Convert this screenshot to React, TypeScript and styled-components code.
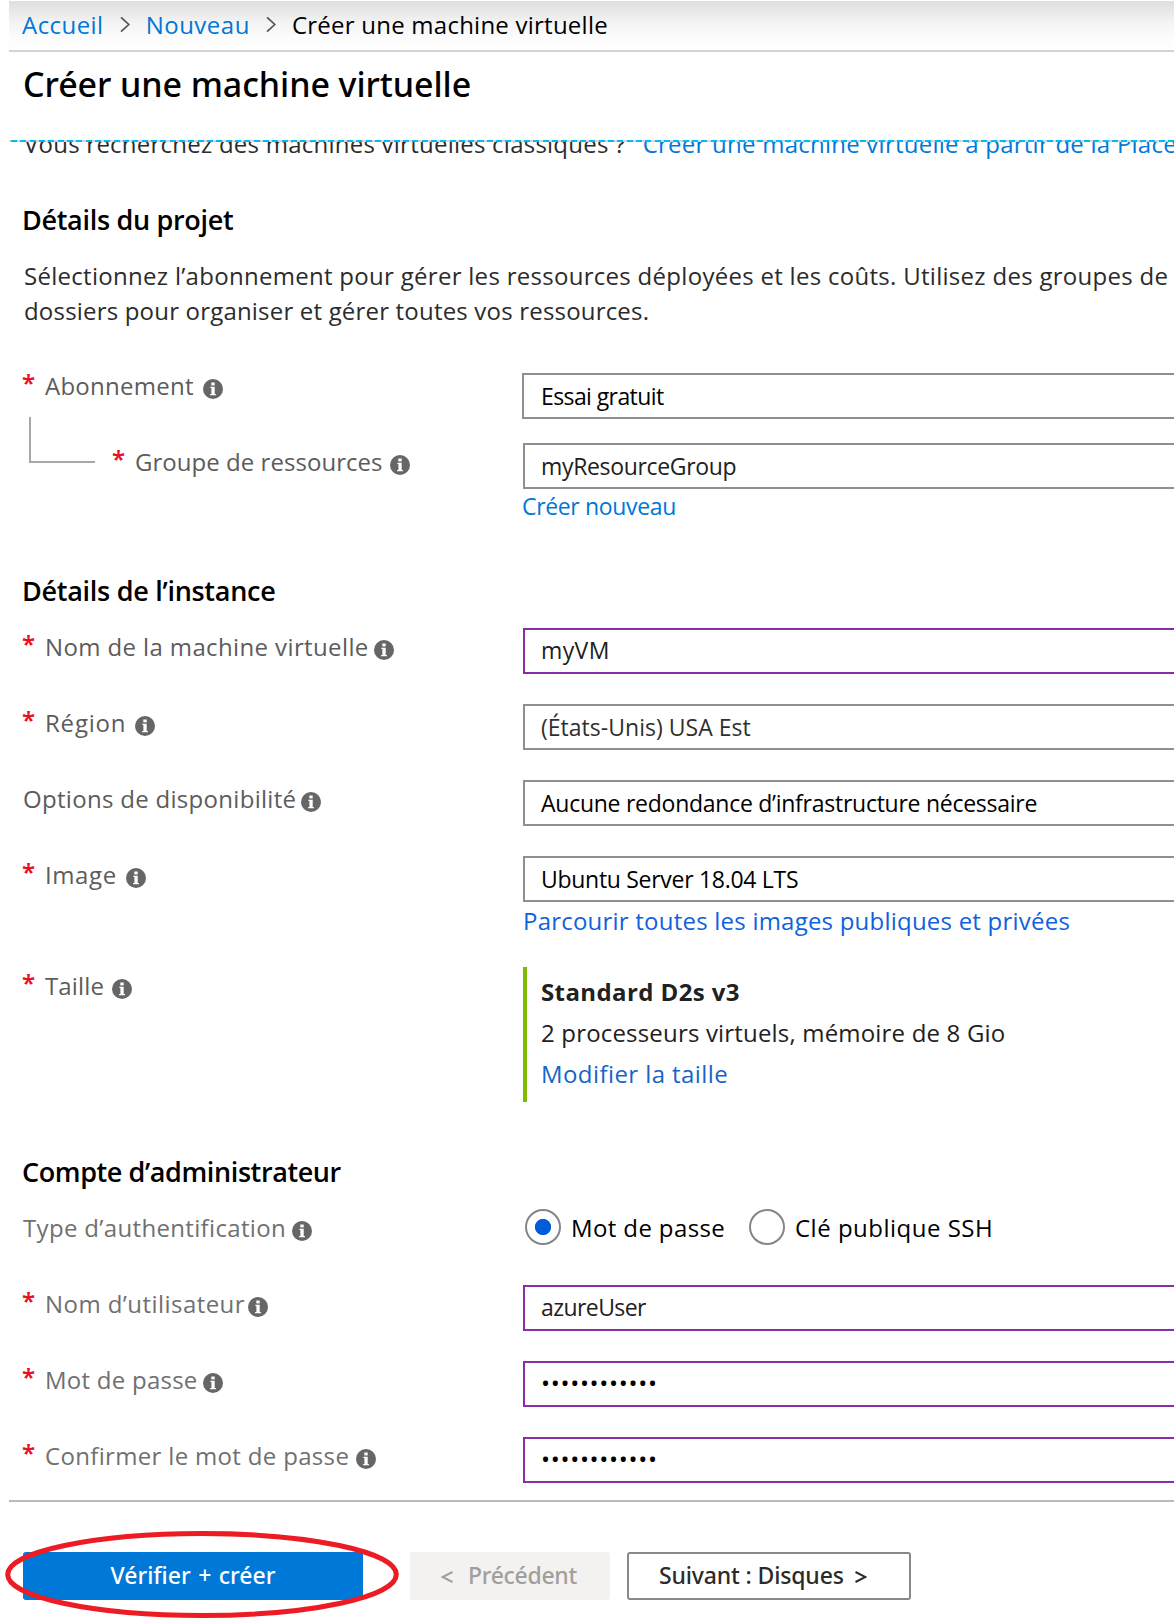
import React from "react";
import styled, { createGlobalStyle } from "styled-components";

const GlobalStyle = createGlobalStyle`
  *, *::before, *::after { box-sizing: border-box; }
  body {
    margin: 0;
    background: #fff;
    color: #212121;
    font-family: "Open Sans", "Noto Sans", sans-serif;
    font-size: 24px;
    overflow: hidden;
  }
`;

const Page = styled.div`
  position: relative;
  width: 1174px;
  height: 1618px;
  display: flex;
  flex-direction: column;
  overflow: hidden;
  background: #fff;
`;

const Breadcrumb = styled.nav`
  flex: none;
  height: 51px;
  margin: 1px 0 0 9px;
  padding: 0 0 2px 13px;
  display: flex;
  align-items: center;
  gap: 16px;
  white-space: nowrap;
  border-bottom: 2px solid #d4d4d4;
  background: linear-gradient(#dedede, #f4f4f4 45%, #fcfcfc 75%, #fff);
`;

const Crumb = styled.span<{ $link?: boolean; $ls: number }>`
  line-height: 34px;
  color: ${(p) => (p.$link ? "#0078d7" : "#000")};
  letter-spacing: ${(p) => p.$ls}px;
`;

const TitleBar = styled.header`
  flex: none;
  height: 88px;
  padding: 10px 0 0 23px;
`;

const Title = styled.h1`
  margin: 0;
  font: 500 34px/44px "Noto Sans", sans-serif;
  letter-spacing: -0.08px;
  color: #000;
`;

const FocusLine = styled.div`
  flex: none;
  height: 2px;
  margin-left: 9px;
  background: repeating-linear-gradient(90deg, #d6d6d6 0 2px, #00bcf2 2px 8px, #d6d6d6 8px 9.33px);
`;

const Content = styled.main`
  flex: none;
  height: 1358px;
  padding-left: 23px;
  overflow: hidden;
`;

const ClassicNotice = styled.p`
  margin: -16px 0 0 1px;
  line-height: 35px;
  white-space: nowrap;
  letter-spacing: 0.24px;
  color: #2b2b2b;
`;

const NoticeLink = styled.a`
  margin-left: 17px;
  color: #0078d7;
`;

const Heading = styled.h2<{ $top: number; $ls: number }>`
  margin: ${(p) => p.$top}px 0 0 -1px;
  font-size: 27px;
  font-weight: 600;
  line-height: 35px;
  letter-spacing: ${(p) => p.$ls}px;
  color: #000;
`;

const Paragraph = styled.p`
  margin: 21px 0 45px 1px;
  line-height: 35px;
  white-space: nowrap;
  color: #2b2b2b;
`;

const TextLine = styled.span<{ $ls: number }>`
  display: block;
  letter-spacing: ${(p) => p.$ls}px;
`;

const Rows = styled.div<{ $top?: number; $gap?: number }>`
  display: flex;
  flex-direction: column;
  gap: ${(p) => p.$gap ?? 30}px;
  margin-top: ${(p) => p.$top ?? 0}px;
`;

const Row = styled.div`
  display: grid;
  grid-template-columns: 500px 1fr;
  align-items: start;
`;

const LabelBox = styled.div<{ $top: number }>`
  display: flex;
  align-items: flex-start;
  height: 25px;
  margin-top: ${(p) => p.$top}px;
  line-height: 25px;
  white-space: nowrap;
`;

const Required = styled.span`
  flex: none;
  width: 22px;
  margin: -3px 0 0 -1px;
  padding-right: 1px;
  box-sizing: content-box;
  font: 600 24px/25px "Noto Sans", sans-serif;
  color: #e81123;
`;

const LabelText = styled.span<{ $width: number; $ls: number; $light?: boolean }>`
  flex: none;
  width: ${(p) => p.$width}px;
  letter-spacing: ${(p) => p.$ls}px;
  color: ${(p) => (p.$light ? "#707070" : "#5c5c5c")};
`;

const InfoSvg = styled.svg`
  flex: none;
  width: 20px;
  height: 20px;
  margin-top: 6px;
`;

const Branch = styled.span`
  flex: none;
  width: 66px;
  height: 46px;
  margin: -32px 18px 0 6px;
  border: solid #a8a8a8;
  border-width: 0 0 2px 2px;
`;

const Field = styled.div<{ $edited?: boolean; $ls?: number; $shift?: number; $tone?: string }>`
  height: 46px;
  margin-left: ${(p) => p.$shift ?? 0}px;
  padding: 0 0 0 ${(p) => 16 - (p.$shift ?? 0)}px;
  border: 2px solid ${(p) => (p.$edited ? "#8a2da5" : "#8f8f8f")};
  border-right: 0;
  font-size: 23px;
  line-height: ${(p) => (p.$edited ? 40 : 42)}px;
  white-space: nowrap;
  letter-spacing: ${(p) => p.$ls ?? 0}px;
  color: ${(p) => p.$tone ?? "#000"};
`;

const Password = styled(Field)`
  font-size: 24px;
  letter-spacing: 0.7px;
`;

const FieldLink = styled.a<{ $size: number; $height: number; $ls: number; $color: string; $shift?: number }>`
  display: block;
  margin-left: ${(p) => p.$shift ?? 0}px;
  font-size: ${(p) => p.$size}px;
  line-height: ${(p) => p.$height}px;
  letter-spacing: ${(p) => p.$ls}px;
  color: ${(p) => p.$color};
`;

const SizeCard = styled.div`
  height: 135px;
  padding: 4px 0 0 14px;
  border-left: 4px solid #7fba00;
  line-height: 41px;
  white-space: nowrap;
`;

const SizeLine = styled.div<{ $ls: number; $bold?: boolean; $link?: boolean }>`
  font-weight: ${(p) => (p.$bold ? 700 : 400)};
  letter-spacing: ${(p) => p.$ls}px;
  color: ${(p) => (p.$link ? "#1565c8" : "#212121")};
`;

const RadioGroup = styled.div`
  display: flex;
  height: 36px;
  padding-left: 2px;
  line-height: 37px;
  white-space: nowrap;
  color: #000;
`;

const RadioOption = styled.label<{ $width: number; $ls: number }>`
  display: flex;
  gap: 10px;
  width: ${(p) => p.$width}px;
  letter-spacing: ${(p) => p.$ls}px;
`;

const RadioRing = styled.span<{ $on?: boolean }>`
  flex: none;
  width: 36px;
  height: 36px;
  border: 2px solid #858585;
  border-radius: 50%;
  background: ${(p) => (p.$on ? "radial-gradient(circle, #015cda 7.7px, #fff 8.5px)" : "#fff")};
`;

const Footer = styled.footer`
  flex: none;
  height: 118px;
  margin-left: 9px;
  padding: 50px 0 0 14px;
  display: flex;
  align-items: flex-start;
  border-top: 2px solid #bababa;
`;

const Button = styled.button<{ $kind: "primary" | "disabled" | "plain"; $width: number; $ls: number }>`
  width: ${(p) => p.$width}px;
  height: 48px;
  padding: 0 0 2px;
  display: flex;
  justify-content: center;
  font: 500 23px/46px "Noto Sans", sans-serif;
  letter-spacing: ${(p) => p.$ls}px;
  white-space: pre;
  border-radius: 3px;
  border: ${(p) => (p.$kind === "plain" ? "2px solid #888" : "0")};
  line-height: ${(p) => (p.$kind === "plain" ? 42 : 46)}px;
  color: ${(p) => ({ primary: "#fff", disabled: "#a19f9d", plain: "#2b2b2b" })[p.$kind]};
  background: ${(p) => ({ primary: "#0078d7", disabled: "#f3f2f1", plain: "#fff" })[p.$kind]};
`;

const PrimaryButton = styled(Button)`
  margin-right: 47px;
  word-spacing: 1.5px;
`;

const BackButton = styled(Button)`
  margin-right: 17px;
  justify-content: flex-start;
  padding-left: 31px;
  gap: 15px;
`;

const NextButton = styled(Button)`
  justify-content: flex-start;
  padding-left: 30px;
  gap: 11px;
`;

const Arrow = styled.svg`
  width: 12px;
  height: 12px;
  margin-top: 19px;
`;

const NextArrow = styled(Arrow)`
  margin-top: 17px;
`;

const Highlight = styled.svg`
  position: absolute;
  left: 4.5px;
  top: 1531px;
  width: 395px;
  height: 87px;
  pointer-events: none;
`;

const Chevron = () => (
  <svg width="10" height="16" viewBox="0 0 10 16" fill="none" stroke="#555" strokeWidth="1.7">
    <path d="M1 .3 8.8 7.5 1 14.7" />
  </svg>
);

const Info = () => (
  <InfoSvg viewBox="0 0 20 20">
    <circle cx="10" cy="10" r="10" fill="#666" />
    <rect x="8.3" y="3.5" width="3.4" height="2.9" fill="#fff" />
    <path d="M7.4 7.8h4.3v7.1h1.2v1.3H7.1v-1.3h1.3V9.1h-1z" fill="#fff" />
  </InfoSvg>
);

interface LabelProps {
  text: string;
  width: number;
  ls: number;
  top?: number;
  required?: boolean;
  light?: boolean;
  nested?: boolean;
}

const Label = ({ text, width, ls, top = 6, required = true, light, nested }: LabelProps) => (
  <LabelBox $top={top}>
    {nested && <Branch />}
    {required && <Required>*</Required>}
    <LabelText $width={width} $ls={ls} $light={light}>{text}</LabelText>
    <Info />
  </LabelBox>
);

const dots = "•".repeat(12);

export default function App() {
  return (
    <>
      <GlobalStyle />
      <Page>
        <Breadcrumb>
          <Crumb $link $ls={0.45}>Accueil</Crumb>
          <Chevron />
          <Crumb $link $ls={0.5}>Nouveau</Crumb>
          <Chevron />
          <Crumb $ls={0.24}>Créer une machine virtuelle</Crumb>
        </Breadcrumb>
        <TitleBar>
          <Title>Créer une machine virtuelle</Title>
        </TitleBar>
        <FocusLine />
        <Content>
          <ClassicNotice>
            Vous recherchez des machines virtuelles classiques ?
            <NoticeLink>Créer une machine virtuelle à partir de la Place de marché</NoticeLink>
          </ClassicNotice>

          <Heading $top={41} $ls={-0.31}>Détails du projet</Heading>
          <Paragraph>
            <TextLine $ls={0.29}>
              Sélectionnez l’abonnement pour gérer les ressources déployées et les coûts. Utilisez des groupes de
            </TextLine>
            <TextLine $ls={0.19}>dossiers pour organiser et gérer toutes vos ressources.</TextLine>
          </Paragraph>
          <Rows $gap={24}>
            <Row>
              <Label text="Abonnement" width={158} ls={0.25} top={0} />
              <Field $shift={-1} $ls={-0.59}>Essai gratuit</Field>
            </Row>
            <Row>
              <Label text="Groupe de ressources" width={255} ls={0.04} nested />
              <div>
                <Field $ls={-0.34} $tone="#212121">myResourceGroup</Field>
                <FieldLink $size={23} $height={34} $ls={-0.34} $shift={-1} $color="#0078d7">Créer nouveau</FieldLink>
              </div>
            </Row>
          </Rows>

          <Heading $top={50} $ls={-0.28}>Détails de l’instance</Heading>
          <Rows $top={20}>
            <Row>
              <Label text="Nom de la machine virtuelle" width={329} ls={0.38} />
              <Field $edited $ls={0.4} $tone="#212121">myVM</Field>
            </Row>
            <Row>
              <Label text="Région" width={90} ls={0.8} />
              <Field $ls={0.02} $tone="#2f2f2f">(États-Unis) USA Est</Field>
            </Row>
            <Row>
              <Label text="Options de disponibilité" width={278} ls={0.3} required={false} />
              <Field $ls={-0.26}>Aucune redondance d’infrastructure nécessaire</Field>
            </Row>
            <Row>
              <Label text="Image" width={81} ls={0.6} />
              <div>
                <Field $ls={-0.29}>Ubuntu Server 18.04 LTS</Field>
                <FieldLink $size={24} $height={37} $ls={0.22} $color="#0f62de">
                  Parcourir toutes les images publiques et privées
                </FieldLink>
              </div>
            </Row>
          </Rows>
          <Rows $top={28}>
            <Row>
              <Label text="Taille" width={67} ls={0.15} />
              <SizeCard>
                <SizeLine $bold $ls={0.4}>Standard D2s v3</SizeLine>
                <SizeLine $ls={0.18}>2 processeurs virtuels, mémoire de 8 Gio</SizeLine>
                <SizeLine $link $ls={0.42}>Modifier la taille</SizeLine>
              </SizeCard>
            </Row>
          </Rows>

          <Heading $top={52} $ls={-0.4}>Compte d’administrateur</Heading>
          <Rows $top={20} $gap={40}>
            <Row>
              <Label text="Type d’authentification" width={269} ls={0.34} required={false} light />
              <RadioGroup>
                <RadioOption $width={224} $ls={0.38}><RadioRing $on />Mot de passe</RadioOption>
                <RadioOption $width={260} $ls={0.5}><RadioRing />Clé publique SSH</RadioOption>
              </RadioGroup>
            </Row>
          </Rows>
          <Rows $top={40}>
            <Row>
              <Label text="Nom d’utilisateur" width={203} ls={0.44} light />
              <Field $edited $ls={-0.57} $tone="#212121">azureUser</Field>
            </Row>
            <Row>
              <Label text="Mot de passe" width={158} ls={0.25} light />
              <Password $edited>{dots}</Password>
            </Row>
            <Row>
              <Label text="Confirmer le mot de passe" width={311} ls={0.33} light />
              <Password $edited>{dots}</Password>
            </Row>
          </Rows>
        </Content>
        <Footer>
          <PrimaryButton $kind="primary" $width={340} $ls={0}>Vérifier + créer</PrimaryButton>
          <BackButton $kind="disabled" $width={200} $ls={-0.3}>
            <Arrow viewBox="0 0 12 12" fill="none" stroke="#a19f9d" strokeWidth="2"><path d="M11.5 1 1.5 6l10 5" /></Arrow>
            <span>Précédent</span>
          </BackButton>
          <NextButton $kind="plain" $width={284} $ls={-0.15}>
            <span>Suivant : Disques</span>
            <NextArrow viewBox="0 0 12 12" fill="none" stroke="#2b2b2b" strokeWidth="2"><path d="M.5 1l10 5-10 5" /></NextArrow>
          </NextButton>
        </Footer>
        <Highlight viewBox="0 0 395 87" fill="none" stroke="#ed1c24" strokeWidth="5">
          <ellipse cx="197" cy="43.5" rx="194.3" ry="41" />
        </Highlight>
      </Page>
    </>
  );
}
